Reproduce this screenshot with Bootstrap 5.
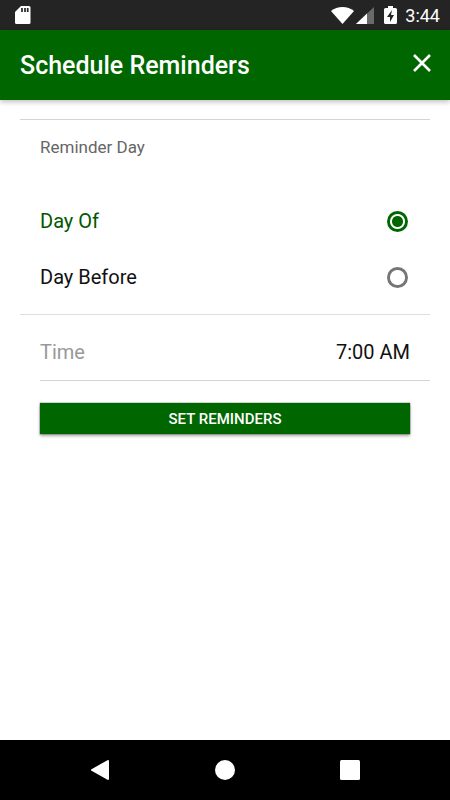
<!DOCTYPE html>
<html lang="en">
<head>
<meta charset="utf-8">
<meta name="viewport" content="width=device-width, initial-scale=1">
<title>Schedule Reminders</title>
<link href="https://cdn.jsdelivr.net/npm/bootstrap@5.3.0/dist/css/bootstrap.min.css" rel="stylesheet">
<style>
:root { --brand: #006600; --line: #d4d4d4; }
body { font-family: Roboto, "Liberation Sans", sans-serif; font-size: 20px; line-height: 24px; color: #111; background: #fff; }
svg { display: block; }
.status-bar { height: 30px; background: #242424; padding: 2px 10px 0 14px; font-size: 18px; }
.status-icons { gap: 2px; }
.clock { margin-left: 6px; }
.title-bar { height: 70px; background: var(--brand); padding: 2px 17px 0 20px; box-shadow: 0 2px 5px rgba(0,0,0,.25); }
.title-bar h1 { font-size: 25px; line-height: 30px; font-weight: 500; }
.close-btn { padding: 0; margin-bottom: 6px; }
.content { padding: 19px 20px 0; }
.day-group { border-top: 1px solid var(--line); border-bottom: 1px solid #dedede; padding-bottom: 9px; }
.day-group legend { font-size: 17px; line-height: 24px; color: #666; padding: 15px 20px 34px; margin: 0; }
.day-row { height: 56px; padding: 0 22px 0 20px; }
.day-row .form-check-input { width: 21px; height: 21px; margin: 0; border: 0; background: radial-gradient(circle, #fff 0 7px, #757575 8px); box-shadow: none; }
.day-row .form-check-input:checked { background: radial-gradient(circle, var(--brand) 0 5px, #fff 6px 7px, var(--brand) 8px); }
.day-row:has(:checked) label { color: #005800; }
.time-row { margin-left: 20px; padding: 25px 20px 16px 0; border-bottom: 1px solid var(--line); }
.time-row label { color: #999; }
.time-row input { font-size: 20px; line-height: 24px; color: #111; min-width: 0; outline-offset: 4px; }
.set-btn { margin: 22px 20px 0; height: 31px; border: 0; border-radius: 0; padding: 0; background: var(--brand); color: #fff; font-size: 15px; font-weight: 500; line-height: 32px; box-shadow: 0 2px 3px rgba(0,0,0,.35), 0 0 1px #000; }
.set-btn:hover { background: #005500; color: #fff; }
.system-nav { height: 60px; padding: 0 75px; background: #000; }
.system-nav .btn { width: 50px; height: 60px; padding: 0; }
</style>
<script src="https://cdn.jsdelivr.net/npm/bootstrap@5.3.0/dist/js/bootstrap.bundle.min.js" defer></script>
</head>
<body class="d-flex flex-column min-vh-100">
<div class="status-bar d-flex align-items-center justify-content-between text-white">
  <svg width="17" height="20" viewBox="0 0 17 20" aria-hidden="true"><path fill="#fff" d="M7 0h8a1.500 1.500 0 0 1 1.500 1.500v15a1.500 1.500 0 0 1-1.500 1.500H2.500A1.500 1.500 0 0 1 1 16.500V6z"/><path stroke="#242424" stroke-width="1.700" d="M8 2v4M11 2v4M13.700 2v4"/></svg>
  <div class="status-icons d-flex align-items-center">
    <svg width="23" height="18" viewBox="0 0 23 18" aria-hidden="true"><path fill="#fff" d="M0 4Q5 0 11.500 0T23 4L11.500 17z"/></svg>
    <svg width="18" height="18" viewBox="0 0 18 18" aria-hidden="true"><path fill="#6a6a6a" d="M18 0v17H0z"/><path fill="#fff" d="M11 6.500V17H0z"/></svg>
    <svg class="ms-2" width="13" height="20" viewBox="0 0 13 20" aria-hidden="true"><path fill="#fff" d="M4 0h5v2h2.500Q13 2 13 3.500v13q0 1.500-1.500 1.500h-10Q0 18 0 16.500v-13Q0 2 1.500 2H4z"/><path fill="#242424" d="M8 4 3 11h3v5l4-7H7z"/></svg>
    <span class="clock">3:44</span>
  </div>
</div>
<header class="title-bar d-flex align-items-center justify-content-between text-white">
  <h1 class="m-0">Schedule Reminders</h1>
  <button type="button" class="btn close-btn" aria-label="Close"><svg width="20" height="20" viewBox="0 0 20 20"><path stroke="#fff" stroke-width="2.600" d="m2 2 16 16M18 2 2 18"/></svg></button>
</header>
<main class="flex-grow-1">
  <form class="content d-flex flex-column">
    <fieldset class="day-group">
      <legend>Reminder Day</legend>
      <div class="day-row d-flex align-items-center">
        <label class="flex-grow-1" for="day-of">Day Of</label>
        <input class="form-check-input" type="radio" name="day" id="day-of" checked>
      </div>
      <div class="day-row d-flex align-items-center">
        <label class="flex-grow-1" for="day-before">Day Before</label>
        <input class="form-check-input" type="radio" name="day" id="day-before">
      </div>
    </fieldset>
    <div class="time-row d-flex align-items-center">
      <label for="time">Time</label>
      <input class="flex-grow-1 border-0 p-0 text-end bg-transparent" type="text" id="time" value="7:00 AM">
    </div>
    <button type="button" class="btn set-btn">SET REMINDERS</button>
  </form>
</main>
<nav class="system-nav d-flex justify-content-between" aria-label="System">
  <button type="button" class="btn d-flex align-items-center justify-content-center" aria-label="Back"><svg width="20" height="20" viewBox="0 0 20 20"><path fill="#fff" stroke="#fff" stroke-width="2" stroke-linejoin="round" d="M18 1v18L2 10z"/></svg></button>
  <button type="button" class="btn d-flex align-items-center justify-content-center" aria-label="Home"><svg width="20" height="20" viewBox="0 0 20 20"><circle cx="10" cy="10" r="10" fill="#fff"/></svg></button>
  <button type="button" class="btn d-flex align-items-center justify-content-center" aria-label="Recent apps"><svg width="20" height="20" viewBox="0 0 20 20"><rect width="20" height="20" rx="1.500" fill="#fff"/></svg></button>
</nav>
</body>
</html>
